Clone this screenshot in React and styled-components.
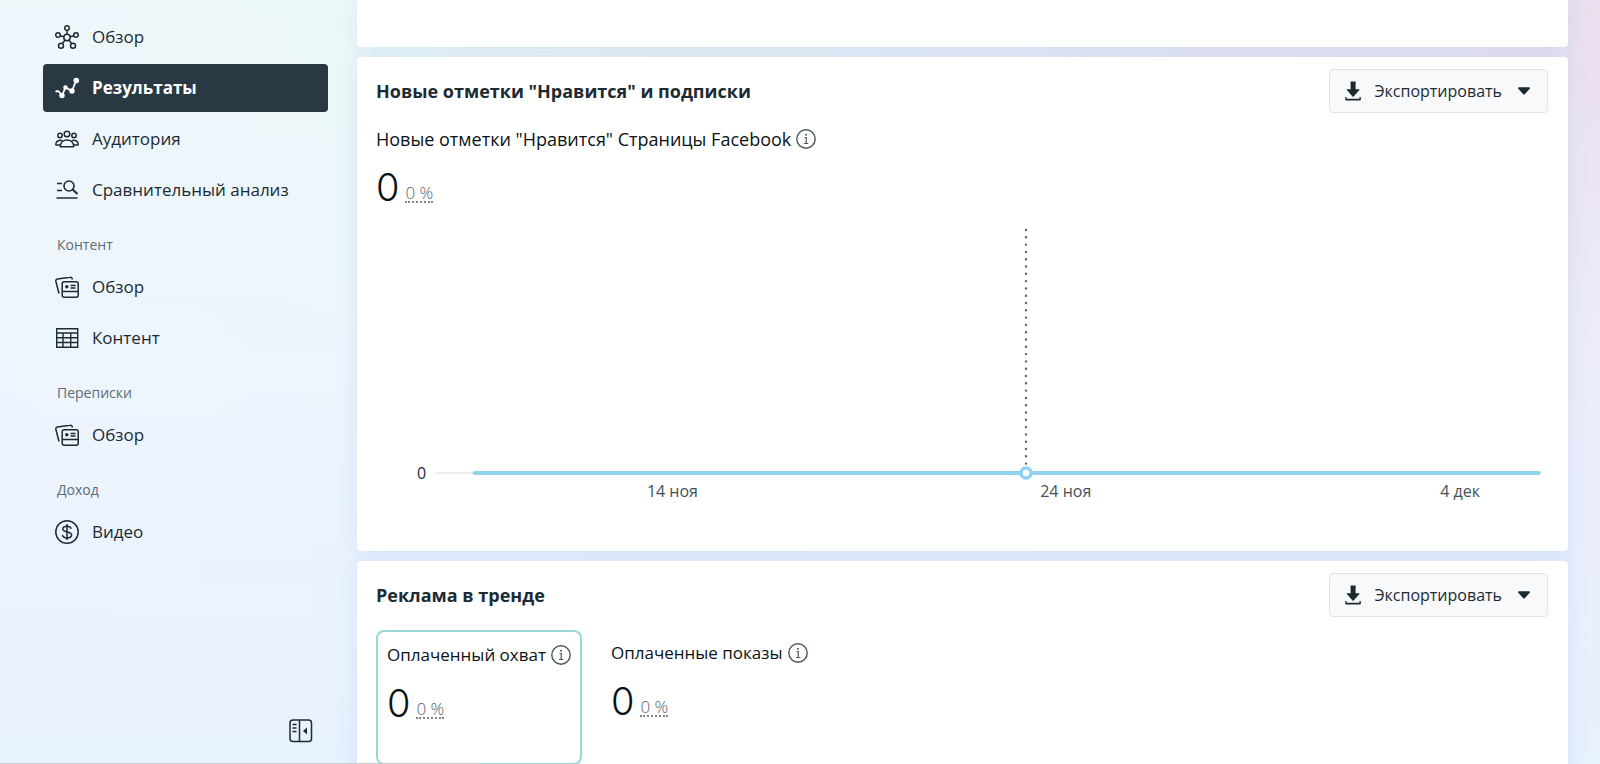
import React from 'react'
import styled, { createGlobalStyle } from 'styled-components'

const GlobalStyle = createGlobalStyle`
    * {
        box-sizing: border-box;
    }
    body {
        margin: 0;
        color: #1c2b33;
        font-family: "Open Sans", "Noto Sans", sans-serif;
        font-size: 17px;
        line-height: 24px;
    }
    button {
        font: inherit;
        color: inherit;
        cursor: pointer;
    }
`;

const OverviewIcon = () => (
    <svg width="24" height="24" viewBox="0 0 24 24" fill="none" stroke="currentColor" strokeWidth="1.5">
        <circle cx="12" cy="12.5" r="3.2"/>
        <circle cx="12" cy="3" r="2.3"/>
        <circle cx="3" cy="10" r="2.3"/>
        <circle cx="21" cy="10" r="2.3"/>
        <circle cx="6" cy="20.7" r="2.5"/>
        <circle cx="18" cy="20.7" r="2.5"/>
        <path d="M12 5.3v4M5.2 10.7l3.7 1M18.8 10.7l-3.7 1M7.3 18.6l2.8-3.6M16.7 18.6l-2.8-3.6"/>
    </svg>
)

const ResultsIcon = () => (
    <svg width="24" height="24" viewBox="0 0 24 24" fill="none" stroke="currentColor" strokeWidth="1.8" strokeLinecap="round" strokeLinejoin="round">
        <path d="M1.2 15.5c1-.8 2.3-.6 3 .5l2.800 3.500 3.500-8 6.500 3.500 4.300-11"/>
        <circle cx="7" cy="19.500" r="1.800" fill="currentColor"/>
        <circle cx="10.500" cy="11.500" r="1.400" fill="currentColor"/>
        <circle cx="17" cy="15" r="1.800" fill="currentColor"/>
        <circle cx="21.300" cy="4.500" r="1.900" fill="currentColor"/>
    </svg>
)

const AudienceIcon = () => (
    <svg width="24" height="24" viewBox="0 0 24 24" fill="none" stroke="currentColor" strokeWidth="1.5" strokeLinejoin="round">
        <circle cx="12" cy="7" r="2.8"/>
        <circle cx="5" cy="8.5" r="2.2"/>
        <circle cx="19" cy="8.5" r="2.2"/>
        <path d="M6 19.8c-.6 0-.9-.4-.8-1 .5-3.4 3.3-5.8 6.8-5.8s6.3 2.4 6.8 5.8c.1.6-.2 1-.8 1z"/>
        <path d="M7.5 13.8c-3.3-1.4-6.3.3-6.7 3.2-.1.7.2 1.1.8 1.1h3.6M16.5 13.8c3.3-1.4 6.3.3 6.7 3.2.1.7-.2 1.1-.8 1.1h-3.6"/>
    </svg>
)

const BenchmarkIcon = () => (
    <svg width="24" height="24" viewBox="0 0 24 24" fill="none" stroke="currentColor" strokeWidth="1.6">
        <path d="M2 5.5h5M2 12.5h5M1.5 20h21"/>
        <circle cx="14" cy="8" r="5"/>
        <path d="M17.6 11.6l4.9 4.4" strokeWidth="2"/>
    </svg>
)

const CardsIcon = () => (
    <svg width="24" height="24" viewBox="0 0 24 24" fill="none" stroke="currentColor" strokeWidth="1.5">
        <rect x="7.2" y="6.7" width="16" height="15.6" rx="2"/>
        <path d="M7.2 16.5h16"/>
        <path d="M4 18.5L.9 6.5c-.3-1.2.3-2.2 1.5-2.4L15 2.2c1.1-.2 1.900.3 2.300 1.500l.2.800"/>
        <circle cx="11.8" cy="11.7" r="1.700" fill="currentColor" stroke="none"/>
        <path d="M15.5 10.5h5M15.500 13h5" strokeWidth="1.3"/>
    </svg>
)

const TableIcon = () => (
    <svg width="24" height="24" viewBox="0 0 24 24" fill="none" stroke="currentColor" strokeWidth="1.4">
        <path d="M1.7 2.7h21v18.6h-21zM1.7 7h21M1.7 11.7h21M1.7 16.5h21M8 7v14.3M15.7 7v14.3"/>
    </svg>
)

const MoneyIcon = () => (
    <svg width="24" height="24" viewBox="0 0 24 24" fill="none" stroke="currentColor" strokeWidth="1.5">
        <circle cx="12" cy="12" r="11.2"/>
        <path d="M12 4v16M16.2 8.7c-.5-1.7-2.1-2.5-4.2-2.5-2.4 0-4.2 1-4.2 2.8 0 4.2 8.8 1.8 8.8 6 0 1.9-2 2.9-4.6 2.9-2.4 0-4.2-1-4.6-2.9"/>
    </svg>
)

const CollapseIcon = () => (
    <svg width="24" height="24" viewBox="0 0 24 24" fill="none" stroke="currentColor" strokeWidth="1.5">
        <rect x="1" y="1" width="21.5" height="21.5" rx="3"/>
        <path d="M10.5 1v21.5M3.5 5.5h4M3.5 9h4M3.5 12.5h4"/>
        <path d="M18 8.5v7l-4-3.5z" fill="currentColor" stroke="none"/>
    </svg>
)

const InfoIcon = () => (
    <svg width="20" height="20" viewBox="0 0 20 20" fill="none" stroke="#4b565c" strokeWidth="1.4">
        <circle cx="10" cy="10" r="9.2"/>
        <path d="M8.5 8.5h1.7v6M8 14.5h4.3" strokeWidth="1.2"/>
        <circle cx="10" cy="5.7" r="1" fill="#4b565c" stroke="none"/>
    </svg>
)

const DownloadIcon = () => (
    <svg width="16" height="20" viewBox="0 0 16 20" fill="currentColor">
        <path d="M5.6.6h5v7.6h3.2c.6 0 .8.6.4 1l-5.5 6.3c-.4.4-.9.4-1.2 0L2 9.2c-.4-.4-.2-1 .4-1h3.2z"/>
        <path d="M.2 16v2.4c0 .7.4 1.1 1.1 1.1h13.4c.7 0 1.1-.4 1.1-1.1V16h-1.3v1.7h-13V16z"/>
    </svg>
)

const CaretIcon = () => (
    <svg width="12" height="8" viewBox="0 0 12 8" fill="currentColor">
        <path d="M1 .3h10c.9 0 1.2.9.7 1.500L7 7c-.6.7-1.4.7-2 0L.3 1.8C-.2 1.2.1.3 1 .3z"/>
    </svg>
)

const menu = [
    {
        items: [
            { label: 'Обзор', icon: <OverviewIcon/> },
            { label: 'Результаты', icon: <ResultsIcon/>, active: true },
            { label: 'Аудитория', icon: <AudienceIcon/> },
            { label: 'Сравнительный анализ', icon: <BenchmarkIcon/> },
        ],
    },
    {
        title: 'Контент',
        items: [
            { label: 'Обзор', icon: <CardsIcon/> },
            { label: 'Контент', icon: <TableIcon/> },
        ],
    },
    { title: 'Переписки', items: [{ label: 'Обзор', icon: <CardsIcon/> }] },
    { title: 'Доход', items: [{ label: 'Видео', icon: <MoneyIcon/> }] },
]

const ticks = [
    { label: '14 ноя', x: '21.4%' },
    { label: '24 ноя', x: '57%' },
    { label: '4 дек', x: '92.7%' },
]

const ExportButton = () => (
    <Export type="button">
        <DownloadIcon/>
        <ExportLabel>Экспортировать</ExportLabel>
        <CaretIcon/>
    </Export>
)

const Metric = ({ label, large }) => (
    <>
        <MetricLabel $large={large}>{label}<InfoIcon/></MetricLabel>
        <MetricRow>
            <MetricValue>0</MetricValue>
            <Change>0 %</Change>
        </MetricRow>
    </>
)

const LikesChart = () => (
    <Chart>
        <AxisValue>0</AxisValue>
        <Plot role="img" aria-label="Новые отметки Нравится">
            <line x1="0" x2="100%" y1="246" y2="246" stroke="#d5d9dc"/>
            <line x1="53.4%" x2="53.4%" y1="3" y2="240" stroke="#5b6166" strokeWidth="2.4" strokeDasharray="0 7.3" strokeLinecap="round"/>
            <line x1="3.5%" x2="99.8%" y1="246" y2="246" stroke="#90d3f1" strokeWidth="4" strokeLinecap="round"/>
            <circle cx="53.4%" cy="246" r="5" fill="#fff" stroke="#90d3f1" strokeWidth="3.5"/>
            {ticks.map((tick) => (
                <Tick key={tick.label} x={tick.x} y="270">{tick.label}</Tick>
            ))}
        </Plot>
    </Chart>
)

const App = () => {
  return (
    <Page>
        <GlobalStyle/>
        <Sidebar>
            <Nav>
                {menu.map((group) => (
                    <React.Fragment key={group.title || 'main'}>
                        {group.title && <GroupTitle>{group.title}</GroupTitle>}
                        {group.items.map((item) => (
                            <NavItem key={item.label} href="#" $active={item.active}>
                                {item.icon}
                                {item.label}
                            </NavItem>
                        ))}
                    </React.Fragment>
                ))}
            </Nav>
            <CollapseButton type="button" aria-label="Свернуть меню"><CollapseIcon/></CollapseButton>
        </Sidebar>
        <Main>
            <TopCard/>
            <Card>
                <CardHead>
                    <Title>Новые отметки "Нравится" и подписки</Title>
                    <ExportButton/>
                </CardHead>
                <Summary>
                    <Metric large label={'Новые отметки "Нравится" Страницы Facebook'}/>
                </Summary>
                <LikesChart/>
            </Card>
            <Card>
                <CardHead>
                    <Title>Реклама в тренде</Title>
                    <ExportButton/>
                </CardHead>
                <Tiles>
                    <Tile $selected><Metric label="Оплаченный охват"/></Tile>
                    <Tile><Metric label="Оплаченные показы"/></Tile>
                </Tiles>
            </Card>
        </Main>
        <StatusLine/>
    </Page>
  )
}

export default App

const Page = styled.div`
    display: flex;
    height: 100vh;
    overflow: hidden;
    background:
        linear-gradient(to bottom, rgba(236, 243, 254, 0) 0%, rgba(236, 243, 254, 0.7) 50%, rgba(232, 241, 254, 1) 100%),
        linear-gradient(to right, #eff7fb 0%, #ecf8f8 22%, #e8e6f1 75%, #ebdeee 100%);
`;
const Sidebar = styled.aside`
    display: flex;
    flex-direction: column;
    justify-content: space-between;
    flex: 0 0 357px;
    padding: 13px 29px 21px 43px;
`;
const Nav = styled.nav`
    display: flex;
    flex-direction: column;
    gap: 3px;
`;
const NavItem = styled.a`
    display: flex;
    align-items: center;
    gap: 13px;
    height: 48px;
    padding: 0 12px;
    border-radius: 4px;
    color: ${(props) => (props.$active ? '#fff' : '#1c2b33')};
    background: ${(props) => (props.$active ? '#283943' : 'transparent')};
    font-weight: ${(props) => (props.$active ? 700 : 400)};
    text-decoration: none;
`;
const GroupTitle = styled.div`
    padding: 16px 14px 3px;
    color: #5d6c75;
    font-size: 14px;
`;
const CollapseButton = styled.button`
    align-self: flex-end;
    display: flex;
    margin-right: 15px;
    padding: 0;
    border: 0;
    background: none;
`;
const Main = styled.main`
    display: flex;
    flex-direction: column;
    flex: 1;
    gap: 10px;
    min-width: 0;
    padding-right: 32px;
`;
const Card = styled.section`
    flex-shrink: 0;
    padding: 12px 20px 12px 19px;
    border-radius: 4px;
    background: #fff;
    box-shadow: 0 0 20px rgba(110, 165, 225, 0.18);
`;
const TopCard = styled(Card)`
    height: 47px;
    border-radius: 0 0 4px 4px;
`;
const CardHead = styled.div`
    display: flex;
    align-items: center;
    justify-content: space-between;
`;
const Title = styled.h2`
    margin: 0;
    font-size: 18px;
    font-weight: 700;
`;
const Export = styled.button`
    display: flex;
    align-items: center;
    height: 44px;
    padding: 0 17px 0 15px;
    border: 1px solid #dee3e9;
    border-radius: 4px;
    background: #f7f9fb;
`;
const ExportLabel = styled.span`
    margin: 0 16px 0 13px;
    font-size: 16px;
`;
const Summary = styled.div`
    padding-top: 14px;
`;
const MetricLabel = styled.div`
    display: flex;
    align-items: center;
    gap: 5px;
    color: #0a1317;
    font-size: ${(props) => (props.$large ? '18px' : '17px')};
    white-space: nowrap;
`;
const MetricRow = styled.div`
    display: flex;
    align-items: flex-end;
    gap: 6px;
    padding-top: 12px;
`;
const MetricValue = styled.span`
    color: #0a1317;
    font-size: 38px;
    line-height: 48px;
    font-family: Inter, sans-serif;
    font-weight: 300;
`;
const Change = styled.button`
    margin-bottom: 8px;
    padding: 0;
    border: 0;
    border-bottom: 2px dotted #7d868c;
    background: none;
    color: #56626a;
    font-size: 17px;
    line-height: 16px;
    font-weight: 300;
`;
const Chart = styled.div`
    display: flex;
    gap: 10px;
    padding: 16px 7px 36px 41px;
`;
const AxisValue = styled.div`
    align-self: flex-start;
    padding-top: 234px;
    font-size: 16px;
`;
const Plot = styled.svg`
    flex: 1;
    min-width: 0;
    height: 276px;
`;
const Tick = styled.text`
    fill: #444f56;
    font-size: 16px;
    text-anchor: middle;
`;
const Tiles = styled.div`
    display: flex;
    align-items: flex-start;
    gap: 20px;
    padding-top: 13px;
`;
const Tile = styled.div`
    height: 135px;
    padding: 11px 9px;
    border: ${(props) => (props.$selected ? '2px solid #98d9d7' : '0')};
    border-radius: 8px;
`;
const StatusLine = styled.div`
    position: fixed;
    left: 0;
    bottom: 0;
    width: 30%;
    height: 1px;
    background: #c9cdd2;
`;
